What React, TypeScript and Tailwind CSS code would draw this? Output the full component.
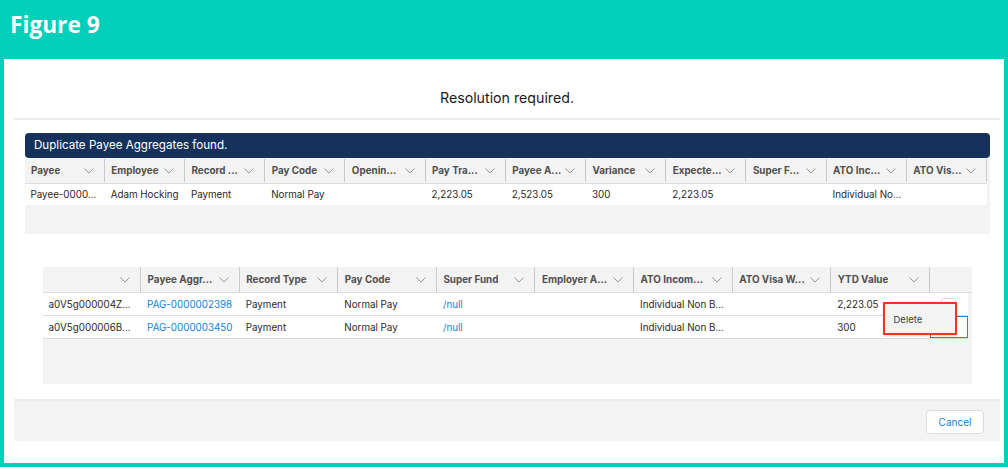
const topColumns = [
  "Payee",
  "Employee",
  "Record ...",
  "Pay Code",
  "Openin...",
  "Pay Tra...",
  "Payee A...",
  "Variance",
  "Expecte...",
  "Super F...",
  "ATO Inc...",
  "ATO Vis...",
];

const topRow = [
  "Payee-0000...",
  "Adam Hocking",
  "Payment",
  "Normal Pay",
  "",
  "2,223.05",
  "2,523.05",
  "300",
  "2,223.05",
  "",
  "Individual No...",
  "",
];

const bottomColumns = [
  "",
  "Payee Aggr...",
  "Record Type",
  "Pay Code",
  "Super Fund",
  "Employer A...",
  "ATO Incom...",
  "ATO Visa W...",
  "YTD Value",
];

const bottomRows = [
  ["a0V5g000004Z...", "PAG-0000002398", "Payment", "Normal Pay", "/null", "", "Individual Non B...", "", "2,223.05"],
  ["a0V5g000006B...", "PAG-0000003450", "Payment", "Normal Pay", "/null", "", "Individual Non B...", "", "300"],
];

function Chevron() {
  return (
    <svg width="10" height="6" viewBox="0 0 10 6" fill="none" className="shrink-0 text-[#807e7b]">
      <path d="M0.5 0.5 L5 5 L9.5 0.5" stroke="currentColor" strokeWidth="0.8" />
    </svg>
  );
}

function HeaderCell({ label }: { label: string }) {
  return (
    <div className="flex h-full items-center justify-between border-r border-[#c9c9c9] pl-[6.5px] pr-[10px]">
      <span className="truncate text-[9.9px] font-bold text-[#514f4d]">{label}</span>
      <Chevron />
    </div>
  );
}

export default function App() {
  return (
    <div className="flex h-[467px] w-[1008px] flex-col overflow-hidden bg-[#00cfba] font-['Inter',sans-serif]">
      <header className="flex h-[59px] shrink-0 items-start pl-[10px] pt-[10px]">
        <h1 className="font-['Open_Sans',sans-serif] text-[22.7px] leading-[30px] font-bold text-white">Figure 9</h1>
      </header>

      <main className="mx-1 mb-1 flex-1 bg-white">
        <div className="ml-[10px] mr-1 flex h-[61px] items-center justify-center border-b-2 border-[#ececec] pt-[19px]">
          <h2 className="text-[14.2px] text-[#1b1b1b]">Resolution required.</h2>
        </div>

        {/* top table */}
        <section className="ml-[20.5px] mt-[13px] w-[965.5px]">
          <div className="flex h-[25px] items-center rounded-[4px] bg-[#16325c] pl-[9.5px] text-[11.6px] text-white">
            Duplicate Payee Aggregates found.
          </div>
          <div className="bg-[#f3f3f3]">
            <div className="grid h-[26px] w-[962.5px] grid-cols-12 border-b border-[#dddbda] py-px">
              {topColumns.map((c) => (
                <HeaderCell key={c} label={c} />
              ))}
            </div>
            <div className="grid h-[21px] w-[962.5px] grid-cols-12 items-center bg-white pt-px text-[9.8px] text-[#2b2826]">
              {topRow.map((v, i) => (
                <div key={i} className="truncate pl-[6px]">
                  {v}
                </div>
              ))}
            </div>
            <div className="h-[29px]" />
          </div>
        </section>

        {/* bottom table */}
        <section className="relative ml-[38.5px] mt-[33px] w-[929.5px] bg-[#f3f3f3]">
          <div className="grid h-[26px] grid-cols-[repeat(9,98.6px)_1fr] border-b border-[#dddbda]">
            {bottomColumns.map((c, i) => (
              <HeaderCell key={i} label={c} />
            ))}
          </div>
          {bottomRows.map((row, r) => (
            <div
              key={r}
              className="mr-1 grid h-[23px] grid-cols-[repeat(9,98.6px)_1fr] items-center border-b border-[#dddbda] bg-white text-[9.8px] text-[#2b2826]"
            >
              {row.map((v, i) => (
                <div key={i} className={i === 1 || i === 4 ? "truncate pl-[6px] pt-[2px] text-[#0f7fe0]" : "truncate pl-[6px] pt-[2px]"}>
                  {v}
                </div>
              ))}
              {r === 0 ? (
                <div className="ml-[11px] mt-[5px] h-[16px] w-[15px] self-start rounded-[3px] border border-[#dddbda]" />
              ) : (
                <div className="h-full border border-[#2a87d8]" />
              )}
            </div>
          ))}
          <div className="h-[45px]" />

          <div className="absolute left-[840.5px] top-[35px] flex h-[33px] w-[74px] items-center border-2 border-[#f0341f] bg-[#f3f3f3] pl-[8.5px] pt-[3px] text-[9.5px] text-[#3e3e3c] shadow-sm">
            Delete
          </div>
        </section>

        <footer className="ml-[10px] mr-1 mt-[15px] flex h-[42px] items-center justify-end border-t-2 border-[#ececec] bg-[#f3f3f3] pr-[16px]">
          <button className="mt-[2px] h-[24px] w-[58px] rounded-[4px] border border-[#dddbda] bg-white text-[10px] text-[#0f7fe0]">
            Cancel
          </button>
        </footer>
      </main>
    </div>
  );
}
